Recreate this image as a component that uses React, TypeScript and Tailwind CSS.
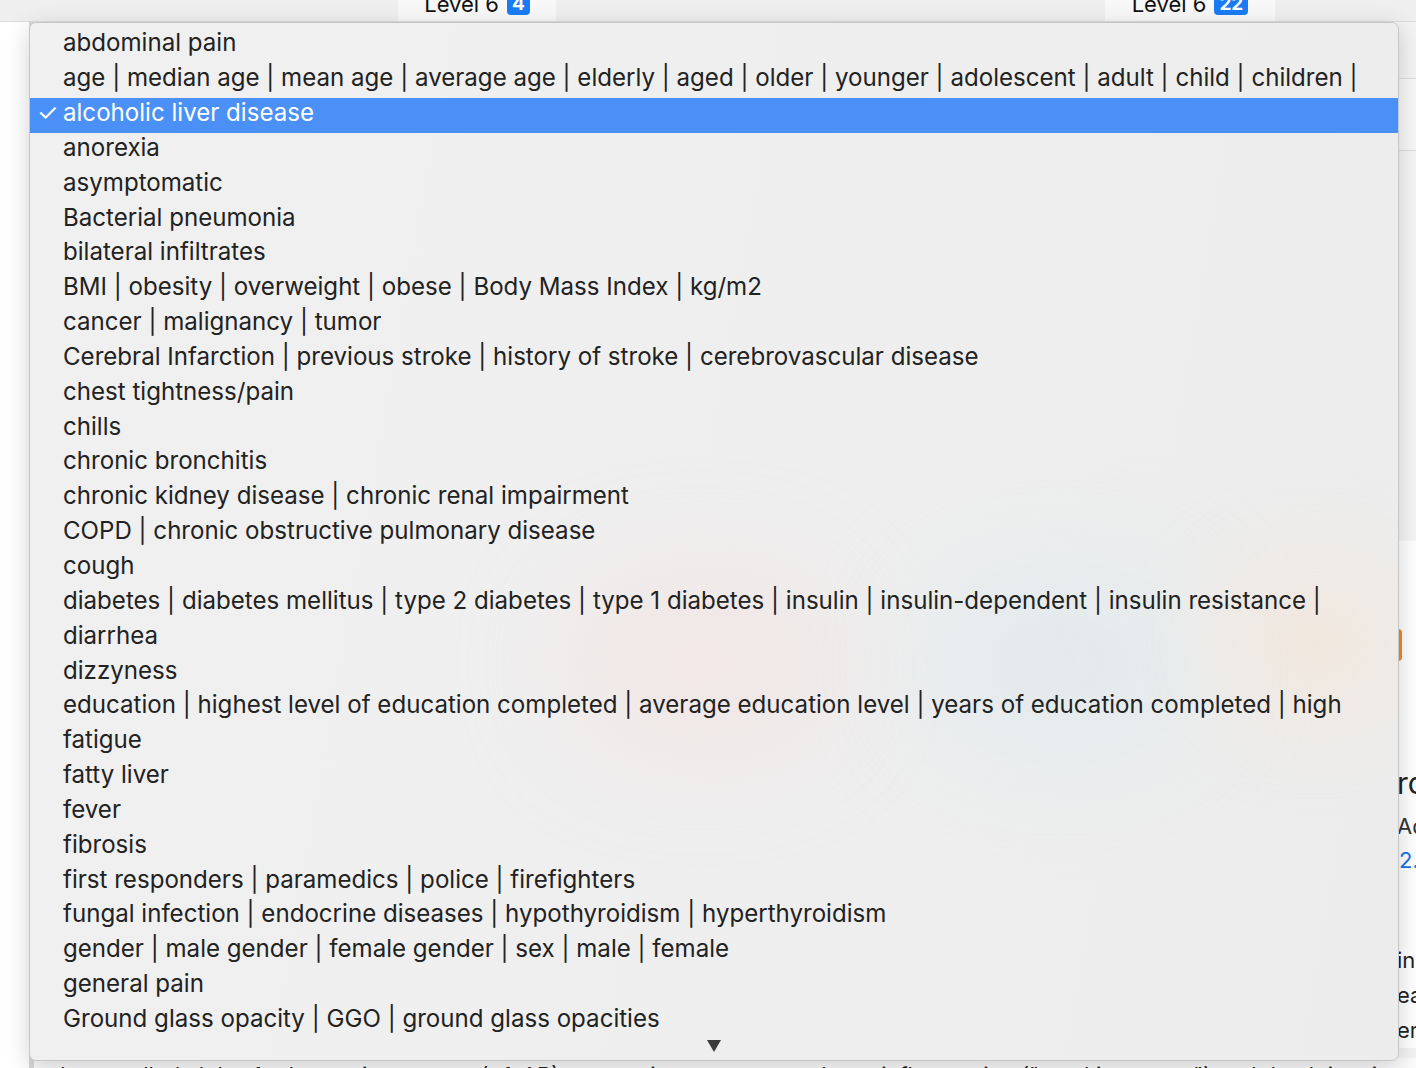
import React from 'react';

const options = [
  'abdominal pain',
  'age | median age | mean age | average age | elderly | aged | older | younger | adolescent | adult | child | children |',
  'alcoholic liver disease',
  'anorexia',
  'asymptomatic',
  'Bacterial pneumonia',
  'bilateral infiltrates',
  'BMI | obesity | overweight | obese | Body Mass Index | kg/m2',
  'cancer | malignancy | tumor',
  'Cerebral Infarction | previous stroke | history of stroke | cerebrovascular disease',
  'chest tightness/pain',
  'chills',
  'chronic bronchitis',
  'chronic kidney disease | chronic renal impairment',
  'COPD | chronic obstructive pulmonary disease',
  'cough',
  'diabetes | diabetes mellitus | type 2 diabetes | type 1 diabetes | insulin | insulin-dependent | insulin resistance |',
  'diarrhea',
  'dizzyness',
  'education | highest level of education completed | average education level | years of education completed | high',
  'fatigue',
  'fatty liver',
  'fever',
  'fibrosis',
  'first responders | paramedics | police | firefighters',
  'fungal infection | endocrine diseases | hypothyroidism | hyperthyroidism',
  'gender | male gender | female gender | sex | male | female',
  'general pain',
  'Ground glass opacity | GGO | ground glass opacities',
];

const selected = 'alcoholic liver disease';

function LevelTab({ count, className }: { count: number; className: string }) {
  return (
    <div className={`flex h-[21px] items-end justify-center bg-[#f8f8f8] ${className}`}>
      <div className="flex items-center gap-[8px] translate-y-[-4px]">
        <span className="text-[22px] leading-[26px] text-[#111]">Level 6</span>
        <span className="rounded-[4px] bg-[#1a7cf4] px-[5px] text-[19px] font-bold leading-[22px] text-white">
          {count}
        </span>
      </div>
    </div>
  );
}

function Page() {
  return (
    <div className="flex h-full flex-col">
      <div className="flex h-[22px] shrink-0 border-b border-[#dcdcdc] bg-[#efefef] pl-[398px]">
        <LevelTab count={4} className="w-[158px]" />
        <div className="w-[549px]" />
        <LevelTab count={22} className="w-[170px]" />
      </div>
      <div className="flex flex-1">
        <div className="w-[29px] shrink-0 bg-white" />
        <div className="flex flex-1 flex-col border-l-[5px] border-[#d8d8d8] bg-[#fbfbfb]">
          <div className="flex flex-1">
            <div className="flex-1" />
            <div className="flex w-[20px] flex-col bg-[#f3f3f3]">
              <div className="h-[56px]" />
              <div className="h-[73px] border-y border-[#dedede] bg-[#f8f8f8]" />
              <div className="h-[390px] bg-[#f5f5f5]" />
              <div className="flex flex-col bg-white pl-[1px] pt-[88px]">
                <div className="h-[32px] w-[5px] rounded-r-[4px] bg-[#f08a24]" />
                <div className="mt-[102px] text-[30px] leading-[40px] text-[#222]">ro</div>
                <div className="mt-[6px] text-[22px] leading-[34px] text-[#333]">Ad</div>
                <div className="pl-[2px] text-[22px] leading-[34px] text-[#1a73e8]">2.</div>
                <div className="mt-[66px] text-[22px] leading-[35px] text-[#222]">
                  in
                  <br />
                  ea
                  <br />
                  em
                </div>
              </div>
            </div>
          </div>
          <p className="h-[10px] overflow-visible whitespace-nowrap pl-[18px] text-[22px] leading-[34px] text-[#222]">
            drugs called alpha-1 adrenergic receptor (α1-AR) antagonists can prevent hyperinflammation ("cytokine storm") and death in mice
          </p>
        </div>
      </div>
    </div>
  );
}

function OptionMenu() {
  return (
    <div className="absolute left-[29px] top-[22px] flex h-[1039px] w-[1370px] flex-col overflow-hidden rounded-[7px] border border-[#c6c6c6] bg-[linear-gradient(100deg,#f0f0f0_0%,#efefef_40%,#ececec_100%)] shadow-[0_6px_24px_rgba(0,0,0,0.18)]">
      <div className="pointer-events-none absolute left-[540px] top-[560px] h-[160px] w-[260px] rounded-full bg-[#f6d9d6] opacity-40 blur-[60px]" />
      <div className="pointer-events-none absolute left-[900px] top-[560px] h-[160px] w-[260px] rounded-full bg-[#d6e6ec] opacity-50 blur-[60px]" />
      <div className="pointer-events-none absolute left-[1200px] top-[560px] h-[120px] w-[170px] rounded-full bg-[#f7e2cc] opacity-60 blur-[50px]" />
      <ul className="relative pt-[5px]">
        {options.map((o) => {
          const active = o === selected;
          return (
            <li
              key={o}
              className={`flex h-[34.85px] items-center whitespace-nowrap text-[24.1px] ${
                active ? 'bg-[#4a90f6] text-white' : 'text-[#222]'
              }`}
            >
              <span className="w-[33px] shrink-0 -translate-y-[2px] pl-[7px] text-[24px]">{active ? '✓' : ''}</span>
              <span className="-translate-y-[2px]">{o}</span>
            </li>
          );
        })}
      </ul>
      <div className="relative mt-[2px] flex justify-center">
        <svg width="14" height="12" viewBox="0 0 14 12">
          <polygon points="0,0 14,0 7,12" fill="#3a3a3a" />
        </svg>
      </div>
    </div>
  );
}

export default function App() {
  return (
    <div
      className="relative h-[1068px] w-[1416px] overflow-hidden bg-white"
      style={{ fontFamily: 'Inter, "Noto Sans", sans-serif' }}
    >
      <Page />
      <OptionMenu />
    </div>
  );
}
